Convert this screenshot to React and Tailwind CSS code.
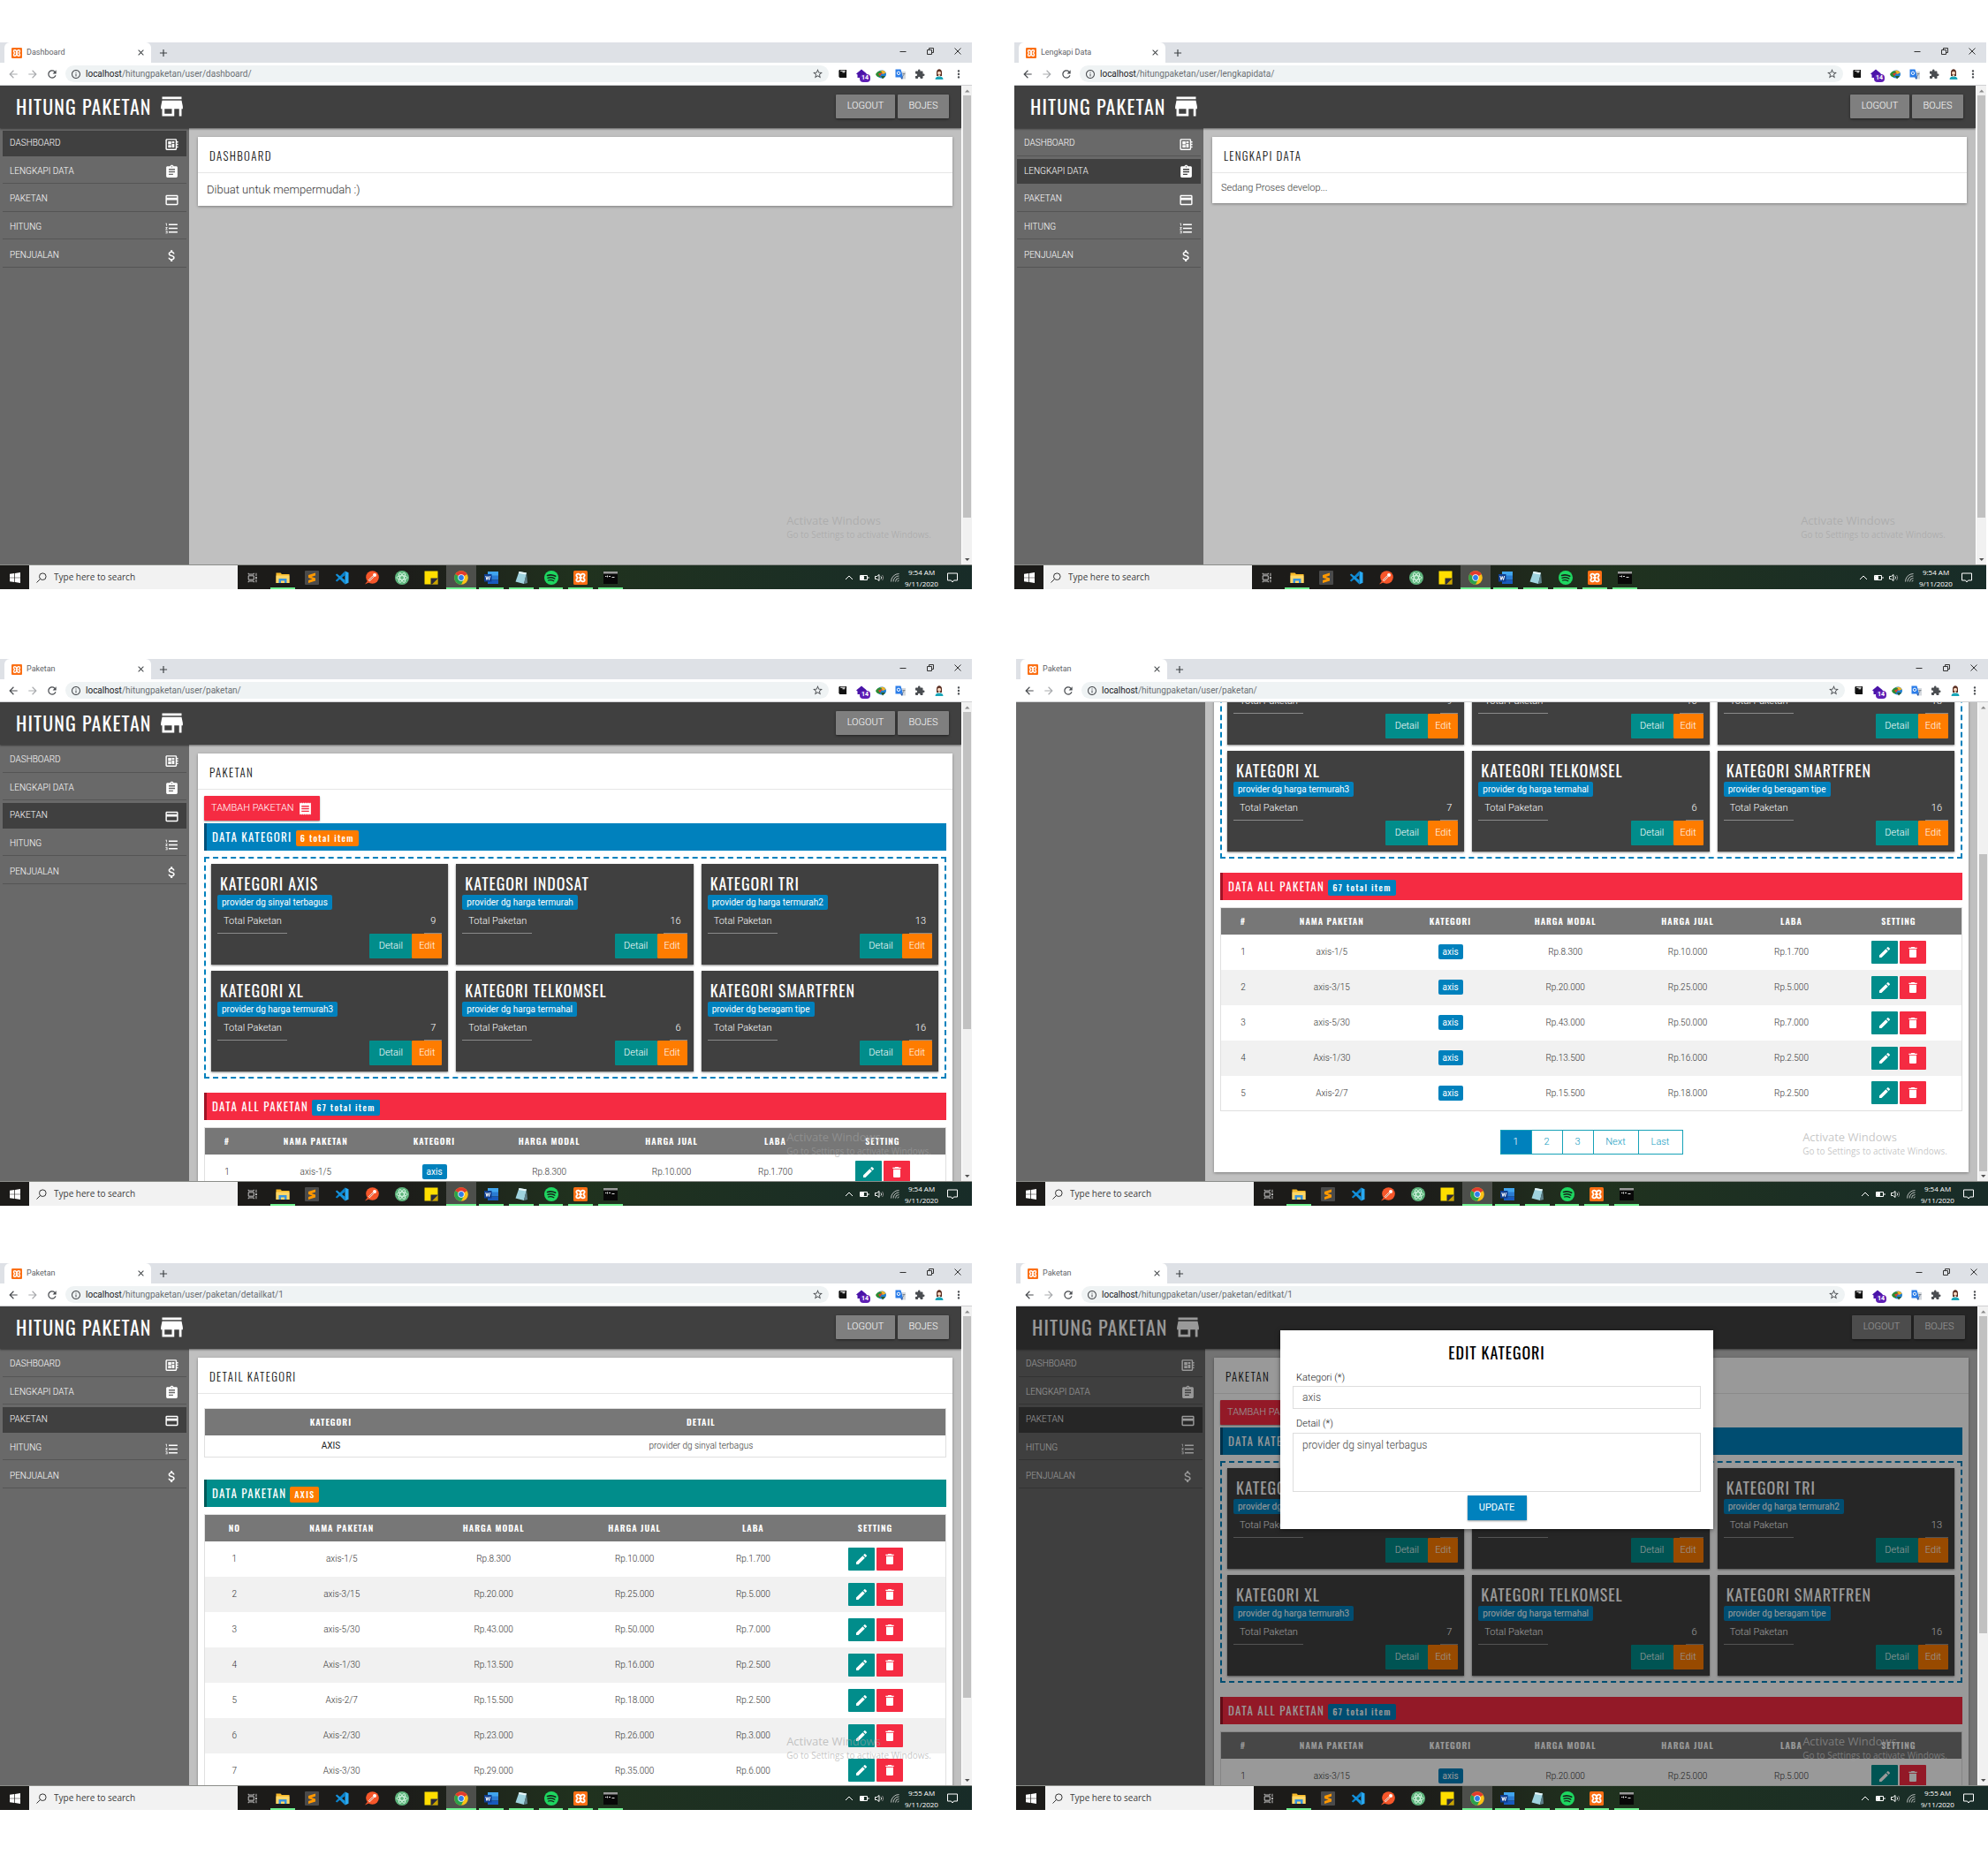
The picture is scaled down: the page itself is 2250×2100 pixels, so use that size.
import { useLayoutEffect, useRef } from "react";
import {
  MdArrowBack,
  MdArrowForward,
  MdAssignment,
  MdAttachMoney,
  MdClose,
  MdAdd,
  MdCreate,
  MdDelete,
  MdDeveloperBoard,
  MdExtension,
  MdFormatListNumbered,
  MdInfoOutline,
  MdMoreVert,
  MdPayment,
  MdReceipt,
  MdRefresh,
  MdStarBorder,
} from "react-icons/md";

const NAV = [
  ["DASHBOARD", MdDeveloperBoard],
  ["LENGKAPI DATA", MdAssignment],
  ["PAKETAN", MdPayment],
  ["HITUNG", MdFormatListNumbered],
  ["PENJUALAN", MdAttachMoney],
];

const KATEGORI = [
  ["AXIS", "provider dg sinyal terbagus", 9],
  ["INDOSAT", "provider dg harga termurah", 16],
  ["TRI", "provider dg harga termurah2", 13],
  ["XL", "provider dg harga termurah3", 7],
  ["TELKOMSEL", "provider dg harga termahal", 6],
  ["SMARTFREN", "provider dg beragam tipe", 16],
];

const PAKET = [
  ["axis-1/5", "8.300", "10.000", "1.700"],
  ["axis-3/15", "20.000", "25.000", "5.000"],
  ["axis-5/30", "43.000", "50.000", "7.000"],
  ["Axis-1/30", "13.500", "16.000", "2.500"],
  ["Axis-2/7", "15.500", "18.000", "2.500"],
  ["Axis-2/30", "23.000", "26.000", "3.000"],
  ["Axis-3/30", "29.000", "35.000", "6.000"],
];

const oswald = "font-['Oswald','Roboto',sans-serif]";
const segoe = "font-['Open_Sans','Noto_Sans',sans-serif]";

/* ---------- logos ---------- */

function XamppLogo({ className }) {
  return (
    <svg viewBox="0 0 16 16" className={className} aria-hidden="true">
      <rect width="16" height="16" rx="1.5" fill="#fb6f14" />
      <g fill="none" stroke="#fff" strokeWidth="1.800" strokeLinejoin="round">
        <path d="M8 6.500C7.800 3.200 3.300 2.600 3.300 5.300c0 1.400 1.300 1.700 1.300 2.700s-1.300 1.300-1.300 2.700C3.300 13.400 7.800 12.800 8 9.500" />
        <path d="M8 6.500c.2-3.300 4.700-3.900 4.700-1.200 0 1.400-1.300 1.700-1.300 2.700s1.300 1.300 1.300 2.700c0 2.700-4.500 2.100-4.700-1.200" />
        <path d="M6.200 8h3.600M8 6.500v3" />
      </g>
    </svg>
  );
}

function StoreIcon({ className }) {
  return (
    <svg viewBox="0 0 24 24" className={className} fill="currentColor" aria-hidden="true">
      <path d="M20 4H4v2h16V4zm1 10v-2l-1-5H4l-1 5v2h1v6h10v-6h4v6h2v-6h1zm-9 4H6v-4h6v4z" />
    </svg>
  );
}

const APPS = [
  {
    name: "Task View",
    art: (
      <g fill="none" stroke="#ddd" strokeWidth="1">
        <path d="M2.500 5.500h7v5h-7zM2.500 2v1.500h7V2M2.500 14v-1.500h7V14M12.500 2v4M12.500 10v4" />
        <path d="M11.500 8h2" strokeWidth="2" />
      </g>
    ),
  },
  {
    name: "File Explorer",
    open: true,
    art: (
      <>
        <path d="M.500 2.500h5l1.500 1.500h8.500V14H.500z" fill="#f7b928" />
        <path d="M.500 5.500h15V14H.500z" fill="#fdd768" />
        <path d="M3.500 14V9h9v5h-2.500v-2.500H6V14z" fill="#3a94dd" />
      </>
    ),
  },
  {
    name: "Sublime Text",
    art: (
      <>
        <rect width="16" height="16" rx="1" fill="#4a4a4a" />
        <path d="M12 2.500v3L7.500 7l4.500 1.500v3L4 14v-3l4.500-1.500L4 8V5z" fill="#ff9800" />
      </>
    ),
  },
  {
    name: "Visual Studio Code",
    art: (
      <>
        <path d="M11.500.5 15.500 2.300v11.400l-4 1.800z" fill="#29a9f2" />
        <path d="M11.500.5v4.800L2.300 12.500.800 11.200z" fill="#0a84cf" />
        <path d="M11.500 15.500v-4.800L2.300 3.500.800 4.800z" fill="#1593dd" />
      </>
    ),
  },
  {
    name: "Postman",
    art: (
      <>
        <circle cx="8.500" cy="7.500" r="7.300" fill="#f6562a" />
        <path d="M4.500 11.500 9.500 6.500" stroke="#ffd9cb" strokeWidth="2.400" />
        <path d="m5 11 4.500-4.500" stroke="#a8432a" strokeWidth=".700" />
        <circle cx="11" cy="5" r="2" fill="#fff" />
        <path d="M0 15.500 3.500 11l2 2z" fill="#f6562a" />
      </>
    ),
  },
  {
    name: "Atom",
    art: (
      <>
        <circle cx="8" cy="8" r="8" fill="#5fb57d" />
        <g fill="none" stroke="#e6fff0" strokeWidth=".8">
          <ellipse cx="8" cy="8" rx="6" ry="2.300" />
          <ellipse cx="8" cy="8" rx="6" ry="2.300" transform="rotate(60 8 8)" />
          <ellipse cx="8" cy="8" rx="6" ry="2.300" transform="rotate(120 8 8)" />
        </g>
      </>
    ),
  },
  {
    name: "Sticky Notes",
    art: (
      <>
        <path d="M.500.500h15v15H.500z" fill="#ffde00" />
        <path d="M7.500 8.500h8v7h-8z" fill="#2b2b3a" />
        <path d="M9 15.500 15.500 9v6.500z" fill="#c9a400" />
      </>
    ),
  },
  {
    name: "Google Chrome",
    open: true,
    active: true,
    art: (
      <>
        <circle cx="8" cy="8" r="7.800" fill="#fbc116" />
        <path d="M8 8 1.250 4.100A7.800 7.800 0 0 1 14.750 4.100z" fill="#e33b2e" />
        <path d="M8 8 1.250 4.100A7.800 7.800 0 0 0 8 15.800l3-6z" fill="#2ba24c" />
        <circle cx="8" cy="8" r="3.700" fill="#fff" />
        <circle cx="8" cy="8" r="2.900" fill="#2f7de9" />
      </>
    ),
  },
  {
    name: "Word",
    open: true,
    art: (
      <>
        <path d="M4 1h12v5H4z" fill="#41a5ee" />
        <path d="M4 5.500h12v5H4z" fill="#2b7cd3" />
        <path d="M4 10.500h12V15H4z" fill="#185abd" />
        <path d="M0 4h8.500v8.500H0z" fill="#103f91" />
        <path d="m1.800 6 1.200 4.500L4.250 6.500 5.500 10.500 6.700 6" fill="none" stroke="#fff" strokeWidth="1" />
      </>
    ),
  },
  {
    name: "Notepad",
    open: true,
    art: (
      <>
        <path d="M5.500 1 14 2.500 11 15 1.500 12.500z" fill="#9fd3de" />
        <path d="M5.500 1 14 2.500l-.5 2L5 3z" fill="#e8f6f8" />
        <path d="m14 2.500 1 11.500-4 1z" fill="#5d7f88" />
      </>
    ),
  },
  {
    name: "Spotify",
    open: true,
    art: (
      <>
        <circle cx="8" cy="8" r="8" fill="#1ed760" />
        <g fill="none" stroke="#16231a" strokeLinecap="round">
          <path d="M3.500 5.500c3-1 6.500-.7 9.200.8" strokeWidth="1.600" />
          <path d="M4 8.300c2.600-.8 5.500-.5 7.800.8" strokeWidth="1.400" />
          <path d="M4.500 11c2.200-.6 4.400-.4 6.300.7" strokeWidth="1.200" />
        </g>
      </>
    ),
  },
  { name: "XAMPP", open: true, logo: true },
  {
    name: "Command Prompt",
    open: true,
    art: (
      <>
        <path d="M0 1h16v14H0z" fill="#080808" />
        <path d="M0 1h16v2.500H0z" fill="#9a9a9a" />
        <path d="M2 6.500h1.500M4.500 5.500v2M6 6.500h2M9.500 7.500h3" stroke="#ddd" strokeWidth="1" />
      </>
    ),
  },
];

/* ---------- desktop chrome ---------- */

function TabStrip({ title }) {
  return (
    <div className="flex h-[23px] items-stretch bg-[#dee1e6] pl-[5px] text-[#3c4043]">
      <div className="flex w-[166px] items-center rounded-t-md bg-white pr-1.5 pl-2">
        <XamppLogo className="size-3" />
        <span className="ml-[5px] flex-1 text-[9px] text-[#5f6368]">{title}</span>
        <button type="button" aria-label="Close tab">
          <MdClose className="size-[11px]" stroke="currentColor" />
        </button>
      </div>
      <button type="button" aria-label="New tab" className="ml-[7px]">
        <MdAdd className="size-[14px]" />
      </button>
      <div className="ml-auto flex items-center gap-[21px] pr-[11px] pb-1">
        <button type="button" aria-label="Minimize">
          <svg viewBox="0 0 10 10" className="size-[10px]" fill="none" stroke="#333">
            <path d="M1.500 5.500h7" />
          </svg>
        </button>
        <button type="button" aria-label="Restore">
          <svg viewBox="0 0 10 10" className="size-[10px]" fill="none" stroke="#333">
            <path d="M1.500 3.500h5v5h-5zM3.500 3.500v-2h5v5h-2" />
          </svg>
        </button>
        <button type="button" aria-label="Close window">
          <svg viewBox="0 0 10 10" className="size-[10px]" fill="none" stroke="#333">
            <path d="m1.500 1.500 7 7m0-7-7 7" />
          </svg>
        </button>
      </div>
    </div>
  );
}

function Toolbar({ path, canGoBack }) {
  return (
    <div className="flex h-[26px] items-center border-b border-[#cfd0d2] bg-white text-[#4a4d51]">
      <div className="flex w-[74px] items-center gap-2 pl-2">
        <button type="button" aria-label="Back" className={canGoBack ? "" : "text-[#a9abae]"}>
          <MdArrowBack className="size-[14px]" />
        </button>
        <button type="button" aria-label="Forward" className="text-[#a9abae]">
          <MdArrowForward className="size-[14px]" />
        </button>
        <button type="button" aria-label="Reload">
          <MdRefresh className="size-[14px]" />
        </button>
      </div>
      <div className="flex h-[19px] flex-1 items-center rounded-full bg-[#eff3f4] px-[6px]">
        <MdInfoOutline className="size-3" />
        <span className="ml-[5px] flex-1 text-[10px] text-[#6b6f73]">
          <span className="text-[#202124]">localhost</span>
          {path}
        </span>
        <button type="button" aria-label="Bookmark this page">
          <MdStarBorder className="size-[13px]" />
        </button>
      </div>
      <div className="mr-1 ml-1 grid w-[154px] grid-cols-7 place-items-center">
        <svg viewBox="0 0 12 12" className="size-[11px]" aria-hidden="true">
          <path d="M2.500 1H11v10H2.500L1.500 9V2z" fill="#111" />
          <path d="M3.500 2h6v1h-6zM6 3.500h3v1H6z" fill="#fff" />
        </svg>
        <span className="relative">
          <svg viewBox="0 0 12 12" className="size-3" aria-hidden="true">
            <path d="M6 .500 12 5.500l-1.500 1V10h-9V6.500L0 5.500z" fill="#4a14a8" />
          </svg>
          <span className="absolute top-[6px] left-1 rounded-sm bg-[#5e1fb5] px-0.5 text-[7px] leading-[9px] font-bold text-white">
            14
          </span>
        </span>
        <svg viewBox="0 0 12 12" className="size-3" aria-hidden="true">
          <ellipse cx="7" cy="6" rx="5" ry="4.500" fill="#1f7fd0" />
          <path d="M5 2.500c3-2 6 0 6.500 2L8 6z" fill="#f0b429" />
          <path d="M0 6c2-4 5-4 7-3L5 9C2 10 1 8 0 6z" fill="#2d8c34" />
          <path d="M3 5.500 8 4l-3 4z" fill="#e23c2e" />
          <path d="M6 8h5l-3 3.500z" fill="#2a5d2d" />
        </svg>
        <svg viewBox="0 0 12 12" className="size-3" aria-hidden="true">
          <path d="M5 3h7v8.500H7z" fill="#d5d9de" />
          <path d="M.500.500h6l2.500 9H.500z" fill="#2b7de9" />
          <circle cx="4" cy="4.800" r="1.700" fill="none" stroke="#fff" />
          <path d="M8.500 5.500h3M10 5v1c0 1.500-1 2.500-2 3" fill="none" stroke="#67707a" strokeWidth=".7" />
          <path d="M6 9.500h3L8 12z" fill="#174ea6" />
        </svg>
        <MdExtension className="size-3" />
        <svg viewBox="0 0 12 12" className="size-3" aria-hidden="true">
          <path d="M3 8V4c0-5 6-5 6 0v4z" fill="#5a2e22" />
          <circle cx="6" cy="4.800" r="2" fill="#fbd9c2" />
          <path d="M1.500 12c0-5 9-5 9 0z" fill="#19a5b8" />
          <path d="M4.800 7h2.400L6 9.500z" fill="#fbd9c2" />
        </svg>
        <MdMoreVert className="size-[14px]" />
      </div>
    </div>
  );
}

function ScrollBar({ start, size }) {
  return (
    <div className="flex w-3 shrink-0 flex-col border-l border-white bg-[#f1f1f1] px-px" aria-hidden="true">
      <svg viewBox="0 0 9 11" className="h-[11px]">
        <path d="M2 7.500h5.500L4.750 4.500z" fill="#8a8a8a" />
      </svg>
      <div className="flex-1">
        <div style={{ height: `${start}%` }} />
        <div className="bg-[#c1c1c1]" style={{ height: `${size}%` }} />
      </div>
      <svg viewBox="0 0 9 11" className="h-[11px]">
        <path d="M2 4h5.500L4.750 7z" fill="#505050" />
      </svg>
    </div>
  );
}

function TaskBar({ time, id }) {
  return (
    <footer
      className={`flex h-7 border-t border-[#8b8d89] bg-linear-to-r from-[#1c1b19] from-40% via-[#20321e] via-60% to-[#182c28] text-white ${segoe}`}
    >
      <button type="button" aria-label="Start" className="flex w-[33px] items-center justify-center">
        <svg viewBox="0 0 12 12" className="size-3" fill="#fff">
          <path d="M0 1.700 5.300 1v4.700H0zM6 .900 12 0v5.700H6zM0 6.300h5.300V11L0 10.300zM6 6.300h6V12l-6-.9z" />
        </svg>
      </button>
      <div className="flex w-[236px] items-center bg-[#f2f2f2] pl-2">
        <svg viewBox="0 0 12 12" className="size-3" fill="none" stroke="#333">
          <circle cx="7.300" cy="4.700" r="3.800" />
          <path d="M4.500 7.500.500 11.500" />
        </svg>
        <input
          id={id}
          type="text"
          aria-label="Search Windows"
          placeholder="Type here to search"
          className="ml-2 w-40 bg-transparent text-[10px] placeholder:text-[#3a3a3a]"
        />
      </div>
      <div className="grid w-[439px] grid-cols-13">
        {APPS.map((app) => (
          <button
            key={app.name}
            type="button"
            aria-label={app.name}
            className={`relative flex items-center justify-center ${app.active ? "bg-[#4d4f4b]" : ""}`}
          >
            {app.logo ? (
              <XamppLogo className="size-4" />
            ) : (
              <svg viewBox="0 0 16 16" className={app.name === "Task View" ? "size-[14px]" : "size-4"}>
                {app.art}
              </svg>
            )}
            {app.open && (
              <span className={`absolute bottom-0 h-0.5 bg-[#6ff08f] ${app.active ? "inset-x-0" : "inset-x-[3px]"}`} />
            )}
          </button>
        ))}
      </div>
      <div className="ml-auto flex items-center gap-[6px] pr-4">
        <svg viewBox="0 0 10 10" className="size-[10px]" fill="none" stroke="#fff">
          <path d="m1 7 4-4 4 4" />
        </svg>
        <svg viewBox="0 0 12 10" className="h-[10px] w-3" fill="none" stroke="#fff">
          <path d="M1.500 2.500h8v5h-8zM11 4v2" />
          <path d="M2.500 3.500h3v3h-3z" fill="#fff" />
        </svg>
        <svg viewBox="0 0 12 10" className="h-[10px] w-3" fill="none" stroke="#fff">
          <path d="M.500 3.500h2l2.500-2v7l-2.500-2h-2zM7 3.500c.8 1 .8 2 0 3" />
          <path d="M8.500 2c1.500 2 1.500 4 0 6" stroke="#888" />
        </svg>
        <svg viewBox="0 0 10 10" className="size-[10px]" fill="none" stroke="#ddd" strokeWidth=".8">
          <path d="M.500 9.500a9 9 0 0 1 9-9M3 9.500a6.500 6.500 0 0 1 6.500-6.500M5.500 9.500a4 4 0 0 1 4-4M8 9.500a1.500 1.500 0 0 1 1.500-1.500" />
        </svg>
        <div className="w-[38px] text-center text-[8px] leading-[13px] whitespace-nowrap">
          <p>{time}</p>
          <p>9/11/2020</p>
        </div>
        <svg viewBox="0 0 12 12" className="ml-1 size-3" fill="none" stroke="#fff">
          <path d="M.500 1h11v8h-4L6 11 4.500 9h-4z" />
        </svg>
      </div>
    </footer>
  );
}

function BrowserWindow({ title, path, time, canGoBack = true, scrollTop = 0, thumb, id, modal, children }) {
  const view = useRef(null);
  useLayoutEffect(() => {
    view.current.scrollTop = scrollTop;
  }, [scrollTop]);

  return (
    <section className="relative min-w-0" aria-label={title}>
      <TabStrip title={title} />
      <Toolbar path={path} canGoBack={canGoBack} />
      <div className="flex h-[542px]">
        <div className="relative flex min-w-0 flex-1">
          <div ref={view} className="min-w-0 flex-1 overflow-hidden">
            {children}
          </div>
          {modal}
        </div>
        <ScrollBar start={thumb[0]} size={thumb[1]} />
      </div>
      <TaskBar time={time} id={id} />
      <div className={`pointer-events-none absolute right-[46px] bottom-[54px] z-30 text-[#a0a0a0]/60 ${segoe}`}>
        <p className="text-[13px] leading-4">Activate Windows</p>
        <p className="text-[10px] leading-4">Go to Settings to activate Windows.</p>
      </div>
    </section>
  );
}

/* ---------- web application ---------- */

function Shell({ active, heading, children }) {
  return (
    <div className="flex min-h-full flex-col">
      <header className="z-10 flex h-12 items-center justify-between bg-[#404040] pr-[14px] pb-0.5 pl-[18px] text-white shadow-[0_1px_2px_rgba(0,0,0,0.5)]">
        <h1 className={`flex items-center gap-[6px] text-[22px] leading-8 tracking-wider ${oswald}`}>
          HITUNG PAKETAN
          <StoreIcon className="size-[33px]" />
        </h1>
        <div className="flex gap-[3px] text-[11px] font-light">
          <button type="button" className="h-[27px] w-[67px] rounded-[1px] bg-[#7f7f7f] shadow-[0_1px_3px_rgba(0,0,0,0.5)]">
            LOGOUT
          </button>
          <button type="button" className="h-[27px] w-[58px] rounded-[1px] bg-[#7f7f7f] shadow-[0_1px_3px_rgba(0,0,0,0.5)]">
            BOJES
          </button>
        </div>
      </header>
      <div className="flex flex-1">
        <nav className="w-[214px] shrink-0 bg-[#696969] px-[3px] shadow-[1px_0_2px_rgba(0,0,0,0.4)]">
          <ul className="grid h-[158px] grid-rows-5">
            {NAV.map(([label, Icon]) => (
              <li key={label} className="flex pt-[3px]">
                <a
                  href="#"
                  className={`flex flex-1 items-center justify-between border-b pr-2 pl-2 text-[10px] font-light text-white ${
                    label === active ? "border-[#404040] bg-[#404040]" : "border-[#555]"
                  }`}
                >
                  {label}
                  <Icon className="mt-[3px] size-[17px]" />
                </a>
              </li>
            ))}
          </ul>
        </nav>
        <main className="min-w-0 flex-1 self-stretch bg-[#c0c0c0] p-[10px]">
          <article className="bg-white shadow-[0_1px_3px_rgba(0,0,0,0.35)]">
            <h2
              className={`flex h-[41px] items-center border-b border-[#e6e6e6] px-[13px] pt-1 text-[13px] font-light tracking-widest text-[#111] ${oswald}`}
            >
              {heading}
            </h2>
            {children}
          </article>
        </main>
      </div>
    </div>
  );
}

function Bar({ className, badgeClass, label, badge }) {
  return (
    <h3
      className={`flex h-[31px] items-center gap-1 border-l-[3px] pl-[6px] text-[13px] font-normal tracking-widest text-white ${oswald} ${className}`}
    >
      {label}
      <span className={`mt-0.5 rounded-xs px-[5px] text-[10px] leading-[18px] font-medium ${badgeClass}`}>{badge}</span>
    </h3>
  );
}

function KategoriCard({ name, note, total }) {
  return (
    <div className="flex h-[114px] flex-col items-start bg-[#404040] px-[7px] pt-[9px] text-white shadow-[0_1px_2px_rgba(0,0,0,0.5)]">
      <h4 className={`px-[3px] text-[18px] leading-[26px] tracking-wider whitespace-nowrap ${oswald}`}>KATEGORI {name}</h4>
      <span className="rounded-xs bg-[#0081bd] px-[5px] text-[10px] leading-[17px]">{note}</span>
      <div className="flex w-full justify-between text-[11px] leading-[26px] font-light whitespace-nowrap">
        <span className="w-[79px] border-b border-[#8a8a8a] px-[7px]">Total Paketan</span>
        <span className="border-b border-[#8a8a8a] px-[7px]">{total}</span>
      </div>
      <div className="flex self-end text-[11px] font-light">
        <button type="button" className="h-7 w-12 rounded-[1px] bg-[#018d8b]">
          Detail
        </button>
        <button type="button" className="h-7 w-[34px] rounded-[1px] bg-[#fe7c00]">
          Edit
        </button>
      </div>
    </div>
  );
}

function TableHead({ columns }) {
  return (
    <thead>
      <tr className={`h-[30px] bg-[#777] text-[10px] tracking-widest text-white ${oswald}`}>
        {columns.map(([label, width]) => (
          <th key={label} scope="col" className="font-semibold" style={{ width: `${width}%` }}>
            {label}
          </th>
        ))}
      </tr>
    </thead>
  );
}

const tableClass = "w-full table-fixed border border-[#e0e0e0] text-center text-[10px] font-light text-[#333]";

function PaketTable({ columns, rows, badge, className }) {
  return (
    <table className={`${tableClass} ${className}`}>
      <TableHead columns={columns} />
      <tbody>
        {rows.map(([name, modal, jual, laba], i) => (
          <tr key={name} className="h-10 even:bg-[#f1f1f1]">
            <td>{i + 1}</td>
            <td>{name}</td>
            {badge && (
              <td>
                <span className="inline-block rounded-xs bg-[#0081bd] px-[5px] leading-[17px] font-normal text-white">
                  axis
                </span>
              </td>
            )}
            <td>Rp.{modal}</td>
            <td>Rp.{jual}</td>
            <td>Rp.{laba}</td>
            <td>
              <div className="flex justify-center gap-0.5 text-white">
                <button
                  type="button"
                  aria-label={`Edit ${name}`}
                  className="flex h-[26px] w-[30px] items-center justify-center rounded-[1px] bg-[#018d8b]"
                >
                  <MdCreate className="size-4" />
                </button>
                <button
                  type="button"
                  aria-label={`Hapus ${name}`}
                  className="flex h-[26px] w-[30px] items-center justify-center rounded-[1px] bg-[#f52b42]"
                >
                  <MdDelete className="size-4" />
                </button>
              </div>
            </td>
          </tr>
        ))}
      </tbody>
    </table>
  );
}

const ALL_COLUMNS = [
  ["#", 6],
  ["NAMA PAKETAN", 18],
  ["KATEGORI", 14],
  ["HARGA MODAL", 17],
  ["HARGA JUAL", 16],
  ["LABA", 12],
  ["SETTING", 17],
];

const DETAIL_COLUMNS = [
  ["NO", 8],
  ["NAMA PAKETAN", 21],
  ["HARGA MODAL", 20],
  ["HARGA JUAL", 18],
  ["LABA", 14],
  ["SETTING", 19],
];

function PaketanPage({ rows = PAKET.slice(0, 5) }) {
  return (
    <Shell active="PAKETAN" heading="PAKETAN">
      <div className="px-[7px] pt-[7px] pb-5">
        <button
          type="button"
          className="flex h-7 items-center gap-1 rounded-[1px] bg-[#f52b42] px-2 text-[11px] font-light text-white shadow-[0_1px_2px_rgba(0,0,0,0.4)]"
        >
          TAMBAH PAKETAN
          <MdReceipt className="size-[17px]" />
        </button>
        <Bar
          className="mt-[3px] border-[#00507a] bg-[#0081bd]"
          badgeClass="bg-[#fe7c00]"
          label="DATA KATEGORI"
          badge="6 total item"
        />
        <div className="mt-[7px] grid grid-cols-3 gap-x-[9px] gap-y-[7px] border-2 border-dashed border-[#0081bd] py-1.5 pr-[7px] pl-1.5">
          {KATEGORI.map(([name, note, total]) => (
            <KategoriCard key={name} name={name} note={note} total={total} />
          ))}
        </div>
        <Bar
          className="mt-4 border-[#a01426] bg-[#f52b42]"
          badgeClass="bg-[#0081bd]"
          label="DATA ALL PAKETAN"
          badge="67 total item"
        />
        <PaketTable className="mt-2" columns={ALL_COLUMNS} rows={rows} badge />
        <div className="mt-[21px] flex justify-center text-[11px] font-light text-[#0f9bc0]">
          <div className="flex divide-x divide-[#17a2b8] border border-[#17a2b8]">
            <button type="button" className="h-[26px] w-[35px] bg-[#0081bd] text-white">
              1
            </button>
            <button type="button" className="w-[35px]">
              2
            </button>
            <button type="button" className="w-[35px]">
              3
            </button>
            <button type="button" className="w-[51px]">
              Next
            </button>
            <button type="button" className="w-[49px]">
              Last
            </button>
          </div>
        </div>
      </div>
    </Shell>
  );
}

function DetailPage() {
  return (
    <Shell active="PAKETAN" heading="DETAIL KATEGORI">
      <div className="px-[7px] pt-4 pb-5">
        <table className={tableClass}>
          <TableHead
            columns={[
              ["KATEGORI", 34],
              ["DETAIL", 66],
            ]}
          />
          <tbody>
            <tr className="h-[25px]">
              <td className="font-normal text-[#222]">AXIS</td>
              <td>provider dg sinyal terbagus</td>
            </tr>
          </tbody>
        </table>
        <Bar
          className="mt-[25px] border-[#005a58] bg-[#018d8b]"
          badgeClass="bg-[#fe7c00]"
          label="DATA PAKETAN"
          badge="AXIS"
        />
        <PaketTable className="mt-2" columns={DETAIL_COLUMNS} rows={PAKET} />
      </div>
    </Shell>
  );
}

function EditDialog() {
  return (
    <div className="absolute inset-0 z-20 flex items-start justify-center bg-black/40 pt-[27px]">
      <form
        role="dialog"
        aria-labelledby="edit-title"
        className="flex w-[490px] flex-col bg-white px-[14px] pt-[13px] pb-[10px] text-[11px] font-light text-[#222] shadow-[0_1px_5px_rgba(0,0,0,0.5)]"
      >
        <h2 id="edit-title" className={`text-center text-[18px] leading-6 font-normal tracking-wider text-black ${oswald}`}>
          EDIT KATEGORI
        </h2>
        <label htmlFor="kategori" className="mt-2 px-1 leading-[18px]">
          Kategori (*)
        </label>
        <input
          id="kategori"
          type="text"
          defaultValue="axis"
          className="h-[26px] border border-[#ddd] px-[10px] text-[12px] text-[#444]"
        />
        <label htmlFor="detail" className="mt-2 px-1 leading-[18px]">
          Detail (*)
        </label>
        <textarea
          id="detail"
          defaultValue="provider dg sinyal terbagus"
          className="mt-px h-[67px] resize-none border border-[#ddd] px-[10px] py-1 text-[12px] text-[#444]"
        />
        <button
          type="button"
          className="mt-1 h-7 w-[67px] self-center bg-[#0081bd] font-normal text-white shadow-[0_1px_2px_rgba(0,0,0,0.4)]"
        >
          UPDATE
        </button>
      </form>
    </div>
  );
}

export default function App() {
  return (
    <div className="min-h-screen bg-white pt-12 pb-12 font-['Roboto',sans-serif]">
      <div className="grid grid-cols-2 gap-x-12 pr-0.5">
        <BrowserWindow
          id="search-1"
          title="Dashboard"
          path="/hitungpaketan/user/dashboard/"
          time="9:54 AM"
          canGoBack={false}
          thumb={[0, 92]}
        >
          <div className="flex h-full flex-col *:flex-1">
            <Shell active="DASHBOARD" heading="DASHBOARD">
              <p className="px-[10px] text-[13px] leading-[37px] font-light text-[#333]">Dibuat untuk mempermudah :)</p>
            </Shell>
          </div>
        </BrowserWindow>
        <BrowserWindow
          id="search-2"
          title="Lengkapi Data"
          path="/hitungpaketan/user/lengkapidata/"
          time="9:54 AM"
          thumb={[0, 92]}
        >
          <div className="flex h-full flex-col *:flex-1">
            <Shell active="LENGKAPI DATA" heading="LENGKAPI DATA">
              <p className="px-[10px] text-[11px] leading-[34px] font-light text-[#333]">Sedang Proses develop...</p>
            </Shell>
          </div>
        </BrowserWindow>
      </div>
      <div className="mt-[79px] grid grid-cols-2 gap-x-[50px]">
        <BrowserWindow id="search-3" title="Paketan" path="/hitungpaketan/user/paketan/" time="9:54 AM" thumb={[0, 69]}>
          <PaketanPage />
        </BrowserWindow>
        <BrowserWindow
          id="search-4"
          title="Paketan"
          path="/hitungpaketan/user/paketan/"
          time="9:54 AM"
          scrollTop={249}
          thumb={[31, 69]}
        >
          <PaketanPage />
        </BrowserWindow>
      </div>
      <div className="mt-[65px] grid grid-cols-2 gap-x-[50px]">
        <BrowserWindow
          id="search-5"
          title="Paketan"
          path="/hitungpaketan/user/paketan/detailkat/1"
          time="9:55 AM"
          thumb={[0, 83]}
        >
          <DetailPage />
        </BrowserWindow>
        <BrowserWindow
          id="search-6"
          title="Paketan"
          path="/hitungpaketan/user/paketan/editkat/1"
          time="9:55 AM"
          thumb={[0, 69]}
          modal={<EditDialog />}
        >
          <PaketanPage rows={PAKET.slice(1, 6)} />
        </BrowserWindow>
      </div>
    </div>
  );
}
